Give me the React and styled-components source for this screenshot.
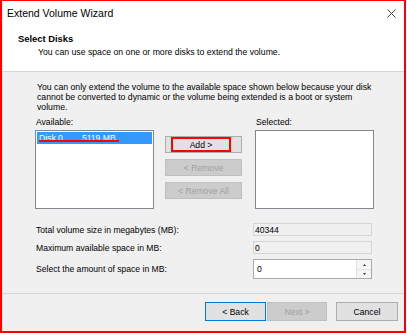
import React from 'react';
import styled, { createGlobalStyle } from 'styled-components';

const Colors = {
  red: '#ff0000',
  white: '#ffffff',
  panel: '#f0f0f0',
  line: '#d5d5d5',
  text: '#000000',
  muted: '#a0a0a0',
  button: '#e1e1e1',
  buttonBorder: '#adadad',
  disabled: '#cccccc',
  disabledBorder: '#bfbfbf',
  focus: '#0078d7',
  select: '#3399ff',
};

const GlobalStyle = createGlobalStyle`
  html, body {
    margin: 0;
    padding: 0;
    background: ${Colors.white};
  }
  body {
    font-family: "Liberation Sans", Arial, sans-serif;
    color: ${Colors.text};
  }
`;

const Window = styled.div`
  box-sizing: border-box;
  width: 406px;
  height: 333px;
  border: 2px solid ${Colors.red};
  border-top-width: 1px;
  display: flex;
  flex-direction: column;
  background: ${Colors.panel};
`;

const TitleBar = styled.div`
  height: 24px;
  display: flex;
  align-items: center;
  justify-content: space-between;
  padding: 0 8px 0 5px;
  background: ${Colors.white};
  font-size: 10.5px;
`;

const Close = styled.svg`
  width: 9px;
  height: 9px;
`;

const Header = styled.div`
  height: 47px;
  box-sizing: border-box;
  padding: 9px 0 0 16px;
  background: ${Colors.white};
  border-bottom: 1px solid ${Colors.line};
  display: flex;
  flex-direction: column;
  gap: 3px;
`;

const HeaderTitle = styled.div`
  font-weight: bold;
  font-size: 9.4px;
  line-height: 10px;
`;

const HeaderText = styled.div`
  padding-left: 20px;
  font-size: 8.7px;
  line-height: 10px;
`;

const Body = styled.div`
  flex: 1;
  padding: 11px 0 0 33px;
  font-size: 8.6px;
  display: flex;
  flex-direction: column;
`;

const Intro = styled.p`
  margin: 0;
  padding-left: 2px;
  white-space: nowrap;
  font-size: 8.7px;
  line-height: 9.8px;
`;

const Columns = styled.div`
  display: flex;
  align-items: flex-start;
  margin-top: 5px;
`;

const Column = styled.div`
  display: flex;
  flex-direction: column;
  gap: 3px;
  margin-left: ${(p) => p.$left || 0}px;
`;

const Label = styled.div`
  line-height: 10px;
  padding-left: 1px;
`;

const ListBox = styled.div`
  box-sizing: border-box;
  width: 119px;
  height: 79px;
  background: ${Colors.white};
  border: 1px solid #828790;
  padding: 1px;
`;

const ListItem = styled.div`
  position: relative;
  height: 12px;
  background: ${Colors.select};
  color: ${Colors.white};
  display: flex;
  align-items: center;
  padding-left: 2px;
  gap: 19px;
  line-height: 12px;
`;

const Underline = styled.span`
  position: absolute;
  left: 2px;
  top: 8px;
  width: 80px;
  height: 2px;
  background: ${Colors.red};
`;

const ButtonStack = styled.div`
  display: flex;
  flex-direction: column;
  gap: 6px;
  margin-left: 11px;
  margin-top: 19px;
`;

const Button = styled.div`
  box-sizing: border-box;
  width: ${(p) => p.$width || 77}px;
  height: ${(p) => p.$height || 17}px;
  display: flex;
  align-items: center;
  justify-content: center;
  background: ${(p) => (p.$disabled ? Colors.disabled : Colors.button)};
  border: 1px solid
    ${(p) => (p.$focus ? Colors.focus : p.$disabled ? Colors.disabledBorder : Colors.buttonBorder)};
  color: ${(p) => (p.$disabled ? Colors.muted : Colors.text)};
  font-size: 8.6px;
`;

const Highlight = styled.span`
  box-sizing: border-box;
  width: 60px;
  height: 15px;
  margin-left: -5px;
  border: 2px solid ${Colors.red};
  display: flex;
  align-items: center;
  justify-content: center;
`;

const Form = styled.div`
  display: grid;
  grid-template-columns: 218px 119px;
  grid-template-rows: 13px 13px 20px;
  row-gap: 5px;
  margin-top: 14px;
  align-items: center;
`;

const FormLabel = styled.div`
  padding-left: 1px;
  line-height: 10px;
`;

const ReadOnly = styled.div`
  box-sizing: border-box;
  height: 13px;
  background: ${Colors.panel};
  border: 1px solid ${Colors.line};
  display: flex;
  align-items: center;
  padding-left: 1px;
`;

const Spinner = styled.div`
  box-sizing: border-box;
  height: 20px;
  background: ${Colors.white};
  border: 1px solid #a9a9a9;
  display: flex;
  align-items: center;
  justify-content: space-between;
  padding-left: 3px;
`;

const SpinButtons = styled.div`
  align-self: stretch;
  width: 14px;
  display: flex;
  flex-direction: column;
  border-left: 1px solid #e3e3e3;
`;

const SpinButton = styled.div`
  flex: 1;
  display: flex;
  align-items: center;
  justify-content: center;
  background: #f5f5f5;
  border-bottom: ${(p) => (p.$top ? '1px solid #e3e3e3' : 'none')};
`;

const Arrow = styled.svg`
  width: 3px;
  height: 2px;
`;

const Footer = styled.div`
  height: 35px;
  border-top: 1px solid ${Colors.line};
  display: flex;
  align-items: center;
  justify-content: flex-end;
  padding: 0 6px 2px 0;
  gap: 9px;
`;

const Pair = styled.div`
  display: flex;
  gap: 1px;
`;

export default function App() {
  return (
    <>
      <GlobalStyle />
      <Window>
        <TitleBar>
          <span>Extend Volume Wizard</span>
          <Close viewBox="0 0 10 10">
            <path d="M0.5 0.5 L9.5 9.5 M9.5 0.5 L0.5 9.5" stroke="#333" strokeWidth="1" />
          </Close>
        </TitleBar>
        <Header>
          <HeaderTitle>Select Disks</HeaderTitle>
          <HeaderText>You can use space on one or more disks to extend the volume.</HeaderText>
        </Header>
        <Body>
          <Intro>
            You can only extend the volume to the available space shown below because your disk
            <br />
            cannot be converted to dynamic or the volume being extended is a boot or system
            <br />
            volume.
          </Intro>
          <Columns>
            <Column>
              <Label>Available:</Label>
              <ListBox>
                <ListItem>
                  <span>Disk 0</span>
                  <span>5119 MB</span>
                  <Underline />
                </ListItem>
              </ListBox>
            </Column>
            <ButtonStack>
              <Button>
                <Highlight>Add &gt;</Highlight>
              </Button>
              <Button $disabled>&lt; Remove</Button>
              <Button $disabled>&lt; Remove All</Button>
            </ButtonStack>
            <Column $left={13}>
              <Label>Selected:</Label>
              <ListBox />
            </Column>
          </Columns>
          <Form>
            <FormLabel>Total volume size in megabytes (MB):</FormLabel>
            <ReadOnly>40344</ReadOnly>
            <FormLabel>Maximum available space in MB:</FormLabel>
            <ReadOnly>0</ReadOnly>
            <FormLabel>Select the amount of space in MB:</FormLabel>
            <Spinner>
              <span>0</span>
              <SpinButtons>
                <SpinButton $top>
                  <Arrow viewBox="0 0 3 2">
                    <path d="M0 2 L1.5 0 L3 2 Z" fill="#333" />
                  </Arrow>
                </SpinButton>
                <SpinButton>
                  <Arrow viewBox="0 0 3 2">
                    <path d="M0 0 L3 0 L1.5 2 Z" fill="#333" />
                  </Arrow>
                </SpinButton>
              </SpinButtons>
            </Spinner>
          </Form>
        </Body>
        <Footer>
          <Pair>
            <Button $focus $width={61} $height={19}>&lt; Back</Button>
            <Button $disabled $width={60} $height={19}>Next &gt;</Button>
          </Pair>
          <Button $width={62} $height={19}>Cancel</Button>
        </Footer>
      </Window>
    </>
  );
}
